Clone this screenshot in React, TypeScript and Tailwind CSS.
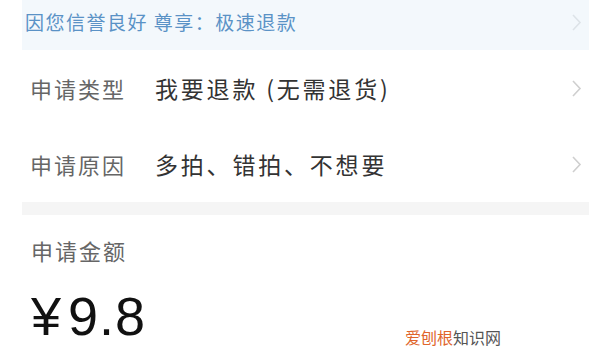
import React from "react";

const cjk = "font-['Noto_Sans_CJK_SC','Noto_Sans',sans-serif]";

function Chevron({ className = "" }: { className?: string }) {
  return (
    <svg width="11" height="19" viewBox="0 0 11 19" className={className} fill="none">
      <polyline points="2,2 9,9.5 2,17" stroke="currentColor" strokeWidth="1.6" strokeLinejoin="miter" />
    </svg>
  );
}

function Row({ label, value }: { label: string; value: string }) {
  return (
    <div className="flex items-center h-[76px] pl-[8px] pr-[7px]">
      <span className="w-[125px] text-[22px] tracking-[2px] text-[#666]">{label}</span>
      <span className="flex-1 text-[23px] tracking-[2.8px] text-[#333]">{value}</span>
      <Chevron className="text-[#cfcfcf]" />
    </div>
  );
}

export default function App() {
  return (
    <div className={`relative w-[589px] h-[355px] overflow-hidden bg-white ${cjk}`}>
      <div className="ml-[22px]">
        <div className="flex items-center justify-between h-[50px] pb-[6px] pl-[3px] pr-[7px] bg-[#f3f8fc]">
          <span className="text-[19px] tracking-[1.5px] text-[#5a92c6]">因您信誉良好 尊享：极速退款</span>
          <Chevron className="text-[#dde3e8]" />
        </div>
        <Row label="申请类型" value="我要退款 (无需退货)" />
        <Row label="申请原因" value="多拍、错拍、不想要" />
        <div className="h-[13px] bg-[#f5f5f5]" />
        <div className="pl-[9px]">
          <div className="pt-[19px] text-[22px] tracking-[2px] text-[#666]">申请金额</div>
          <div className="mt-[22px] font-['Liberation_Sans',sans-serif] text-[54px] leading-none text-[#111] tracking-[1px]">
            <span className="mr-[6px]">¥</span>9.8
          </div>
        </div>
      </div>
      <div className="absolute right-[88px] bottom-[10px] text-[16px] leading-none">
        <span className="text-[#e0652b]">爱刨根</span>
        <span className="text-[#555]">知识网</span>
      </div>
    </div>
  );
}
